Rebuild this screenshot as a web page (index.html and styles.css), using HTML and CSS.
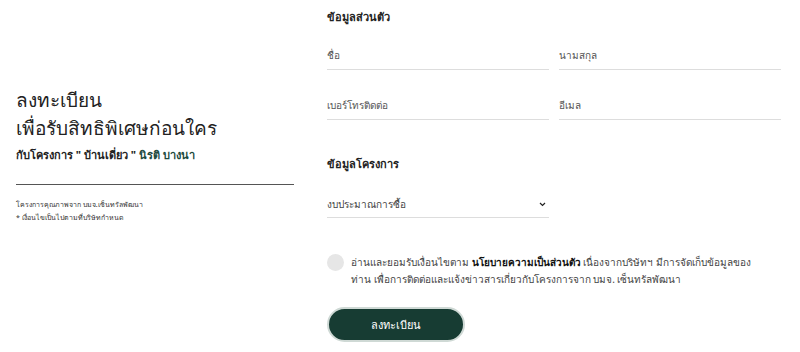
FILE: index.html
```html
<!DOCTYPE html>
<html>

<head>
  <meta name="viewport" content="width=device-width, initial-scale=1.0" />
  <title>ลงทะเบียน</title>

  <link rel="stylesheet" href="styles.css">
</head>

<body>
  <div class="page">
    <div class="intro">
      <h1 class="introTitle">ลงทะเบียน<br>เพื่อรับสิทธิพิเศษก่อนใคร</h1>
      <p class="introSub">กับโครงการ " บ้านเดี่ยว " <span class="brand">นิรติ บางนา</span></p>
      <hr class="introLine">
      <p class="introNote">โครงการคุณภาพจาก บมจ.เซ็นทรัลพัฒนา</p>
      <p class="introNote">* เงื่อนไขเป็นไปตามที่บริษัทกำหนด</p>
    </div>

    <form class="regForm">
      <h2 class="sectionTitle">ข้อมูลส่วนตัว</h2>
      <div class="fieldGrid">
        <div class="field">ชื่อ</div>
        <div class="field">นามสกุล</div>
        <div class="field">เบอร์โทรติดต่อ</div>
        <div class="field">อีเมล</div>
      </div>

      <h2 class="sectionTitle sectionTitle2">ข้อมูลโครงการ</h2>
      <div class="field selectField">
        <span>งบประมาณการซื้อ</span>
        <svg class="chevron" width="7" height="5" viewBox="0 0 7 5">
          <path d="M1 1 L3.5 3.5 L6 1" fill="none" stroke="#222" stroke-width="1.2" />
        </svg>
      </div>

      <div class="consent">
        <span class="radio"></span>
        <p class="consentText">อ่านและยอมรับเงื่อนไขตาม <b>นโยบายความเป็นส่วนตัว</b> เนื่องจากบริษัทฯ มีการจัดเก็บข้อมูลของท่าน เพื่อการติดต่อและแจ้งข่าวสารเกี่ยวกับโครงการจาก บมจ. เซ็นทรัลพัฒนา</p>
      </div>

      <button type="button" class="submitBtn">ลงทะเบียน</button>
    </form>
  </div>
</body>

</html>
```

FILE: styles.css
```css
    body {
      margin: 0;
      background-color: #fff;
      color: #222;
      font-family: "Noto Sans", "DejaVu Sans", sans-serif;
    }

    .page {
      display: flex;
      height: 352px;
    }

    .intro {
      width: 278px;
      margin-left: 16px;
      padding-top: 86px;
    }

    .introTitle {
      margin: 0;
      font-size: 19px;
      font-weight: normal;
      line-height: 28px;
      color: #222;
    }

    .introSub {
      margin: 4px 0 0;
      font-size: 11px;
      font-weight: bold;
      line-height: 18px;
    }

    .brand {
      color: #1d4a3e;
    }

    .introLine {
      margin: 20px 0 13px;
      border: 0;
      border-top: 1px solid #555;
    }

    .introNote {
      margin: 0;
      font-size: 7px;
      line-height: 13px;
      color: #333;
    }

    .regForm {
      width: 454px;
      margin-left: 33px;
      padding-top: 7px;
    }

    .sectionTitle {
      margin: 0;
      font-size: 11px;
      font-weight: bold;
      line-height: 20px;
    }

    .sectionTitle2 {
      margin-top: 34px;
    }

    .fieldGrid {
      display: grid;
      grid-template-columns: 222px 222px;
      column-gap: 10px;
      row-gap: 25px;
      margin-top: 18px;
    }

    .field {
      font-size: 10px;
      line-height: 20px;
      color: #555;
      padding-bottom: 4px;
      border-bottom: 1px solid #ddd;
    }

    .selectField {
      display: flex;
      justify-content: space-between;
      align-items: center;
      width: 222px;
      margin-top: 20px;
      padding-bottom: 3px;
      color: #444;
    }

    .chevron {
      margin-right: 3px;
    }

    .consent {
      display: flex;
      align-items: flex-start;
      margin-top: 36px;
    }

    .radio {
      flex: none;
      width: 17px;
      height: 17px;
      margin: 0 7px 0 0;
      border-radius: 50%;
      background-color: #e6e6e6;
    }

    .consentText {
      width: 416px;
      margin: 0;
      font-size: 10px;
      line-height: 17px;
      color: #444;
    }

    .consentText b {
      color: #111;
    }

    .submitBtn {
      display: block;
      margin-top: 19px;
      width: 138px;
      height: 35px;
      border: 2px solid #cfd9d5;
      border-radius: 18px;
      background-color: #173c33;
      color: #fff;
      font-family: inherit;
      font-size: 11px;
    }
```
